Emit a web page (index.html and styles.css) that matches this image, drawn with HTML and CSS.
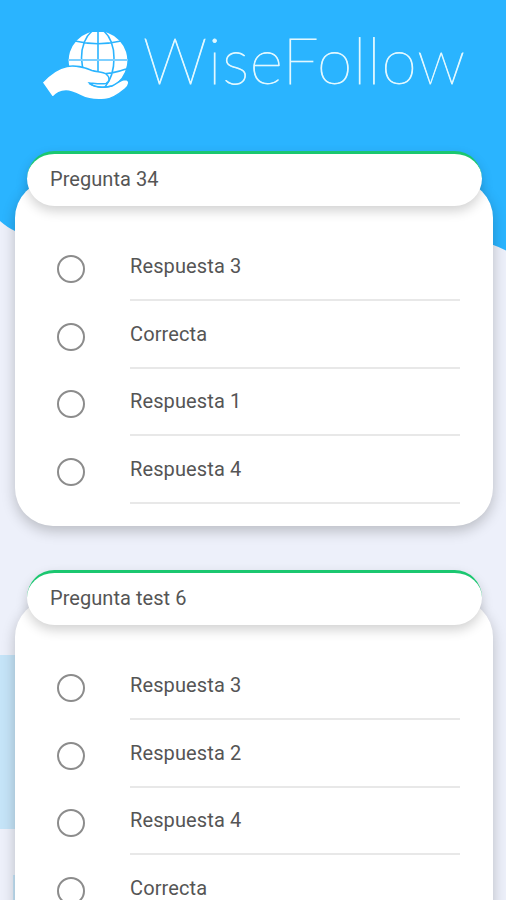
FILE: index.html
```
<!DOCTYPE html>
<html lang="es">
<head>
<meta charset="utf-8">
<title>WiseFollow</title>
<link rel="stylesheet" href="styles.css">
</head>
<body>
<div class="screen">
  <svg class="backdrop" viewBox="0 0 506 900" aria-hidden="true">
    <path fill="#2ab4ff" d="M0 0H506V250.500Q498 246.500 492 244.500L460 230L60 250L15 231Q8 228 0 221Z"/>
    <path fill="#c5e4f8" d="M0 655H30V829H0ZM13 875H30V900H13Z"/>
  </svg>
  <header class="brand">
    <svg class="logo" viewBox="0 0 90 72" aria-hidden="true">
      <path fill="#fff" d="M46 3Q48 2 51 2H61Q64 2 66 3A29.300 29.300 0 1 1 46 3Z"/>
      <g fill="none" stroke="#2ab4ff" stroke-width="1.600">
        <path d="M56 0V50M33 11Q56 16.500 79 11M51 0Q39.500 10 39.500 28Q39.500 36 43 44M61 0Q72 10 72 28Q72 46 63 57M50 44Q68 45 84 39"/>
        <path d="M26 30H86" stroke="#7fd0ff" stroke-width="2"/>
      </g>
      <path fill="#fff" stroke="#2ab4ff" stroke-width="1.500" d="M0 52.500C8 44 16 38 25 36.500C35 34.500 43 38 50 40.500C55 42 61 42 64 44C68 47 68 52 64 53.500C59 54.500 53 53.500 47.500 53C52 57.500 62 58 70 56C76 53 79 49.500 83 49.500C89 50 87 56 83 59C77 64 70 69 63 69.500C54 70.500 46 69.500 39 66C33 63 29 61 24 61C18 61 15 63.500 10.500 67.500Z"/>
      <path d="M47 53.300C53 57.500 62 58 70 56" fill="none" stroke="#2ab4ff" stroke-width="1.500"/>
    </svg>
    <h1 class="wordmark">WiseFollow</h1>
  </header>
  <main class="questions">
    <section class="question">
      <h2 class="prompt">Pregunta 34</h2>
      <div class="answers">
        <label class="answer"><span class="radio"></span><span class="label">Respuesta 3</span></label>
        <label class="answer"><span class="radio"></span><span class="label">Correcta</span></label>
        <label class="answer"><span class="radio"></span><span class="label">Respuesta 1</span></label>
        <label class="answer"><span class="radio"></span><span class="label">Respuesta 4</span></label>
      </div>
    </section>
    <section class="question">
      <h2 class="prompt">Pregunta test 6</h2>
      <div class="answers">
        <label class="answer"><span class="radio"></span><span class="label">Respuesta 3</span></label>
        <label class="answer"><span class="radio"></span><span class="label">Respuesta 2</span></label>
        <label class="answer"><span class="radio"></span><span class="label">Respuesta 4</span></label>
        <label class="answer"><span class="radio"></span><span class="label">Correcta</span></label>
      </div>
    </section>
  </main>
</div>
</body>
</html>
```
FILE: styles.css
```
* { box-sizing: border-box; }
body { margin: 0; }
.screen {
  position: relative;
  height: 900px;
  overflow: hidden;
  background: #edf0fa;
  font-family: Roboto, "Liberation Sans", sans-serif;
  color: #555;
}
.backdrop {
  position: absolute;
  inset: 0;
  width: 506px;
  height: 900px;
}
.brand {
  position: relative;
  display: flex;
  height: 151px;
  padding: 30px 0 0 42px;
}
.logo { width: 90px; height: 72px; flex: none; }
.wordmark {
  margin: -8px 0 0 11px;
  font: 100 64px/76px Lato, sans-serif;
  letter-spacing: .9px;
  color: #e2f8ff;
  -webkit-text-stroke: .8px #e2f8ff;
  white-space: nowrap;
}
.questions {
  position: relative;
  display: flex;
  flex-direction: column;
  gap: 44px;
  padding: 0 13.5px 0 15px;
}
.question { flex: none; }
.prompt {
  position: relative;
  z-index: 1;
  height: 55px;
  margin: 0 11px 0 12px;
  padding: 0 23px;
  border-top: 3px solid #1bc770;
  border-radius: 28px;
  background: #fff;
  box-shadow: 0 5px 12px rgba(0, 0, 0, .18);
  font-size: 20px;
  font-weight: 400;
  line-height: 51px;
  letter-spacing: .05px;
}
.answers {
  height: 346px;
  margin-top: -26px;
  padding: 53px 33px 0 42px;
  border-radius: 38px;
  background: #fff;
  box-shadow: 0 5px 14px rgba(0, 0, 0, .22);
}
.answer { display: flex; height: 67.6px; }
.radio {
  flex: none;
  width: 28px;
  height: 28px;
  margin: 22px 45px 0 0;
  border: 2.5px solid #8c8c8c;
  border-radius: 50%;
}
.label {
  flex: 1;
  margin-bottom: -.5px;
  border-bottom: 2px solid #e8e8e8;
  font-size: 20px;
  line-height: 66px;
  letter-spacing: .12px;
}
```
